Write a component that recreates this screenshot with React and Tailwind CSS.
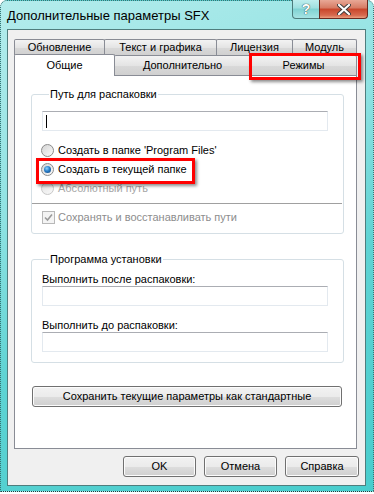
import React from "react";

function Radio({ checked, disabled }) {
  return (
    <span
      className={
        "relative flex h-[13px] w-[13px] shrink-0 items-center justify-center rounded-full border " +
        (disabled
          ? "border-[#c8c8c8] bg-gradient-to-br from-[#e6e6e6] to-[#f8f8f8]"
          : "border-[#8b8b8b] bg-gradient-to-br from-[#d4d4d4] to-[#fafafa]")
      }
    >
      {checked && (
        <span className="h-[7px] w-[7px] rounded-full bg-[radial-gradient(circle_at_40%_35%,#8fd3ff_0%,#2a7fc8_45%,#0d3f7a_100%)]" />
      )}
    </span>
  );
}

function Field({ className = "", children }) {
  return (
    <div
      className={
        "flex h-[20px] w-[286px] items-center border border-[#e3e9ef] border-t-[#abadb3] bg-white " + className
      }
    >
      {children}
    </div>
  );
}

function Btn({ children, className = "" }) {
  return (
    <div
      className={
        "flex items-center justify-center rounded-[3px] border border-[#707070] bg-[linear-gradient(#f2f2f2_0%,#ebebeb_50%,#dddddd_51%,#cfcfcf_100%)] text-[11px] leading-none text-black shadow-[inset_0_0_0_1px_#fcfcfc] " +
        className
      }
    >
      {children}
    </div>
  );
}

function Tab({ children, className = "" }) {
  return (
    <div
      className={
        "-ml-px flex items-center justify-center rounded-t-[2px] border border-b-0 border-[#898c95] bg-[linear-gradient(#f3f3f3,#e4e4e4_50%,#d9d9d9_51%,#d0d0d0)] text-[11px] leading-none text-black first:ml-0 " +
        className
      }
    >
      {children}
    </div>
  );
}

export default function App() {
  return (
    <div
      className="relative h-[494px] w-[374px] overflow-hidden bg-white"
      style={{ fontFamily: '"Liberation Sans", Arial, sans-serif' }}
    >
      {/* Window frame */}
      <div className="flex h-[492px] w-[374px] flex-col rounded-t-[7px] border border-dotted border-b-[#1e3e3e] border-l-[#3c7070] border-t-[#3c7070] border-r-[#3c7070] bg-[linear-gradient(160deg,#b4ecec_0%,#8fe2e2_35%,#5fd3d3_60%,#48cdcd_100%)] pb-[5px] pl-[6px] pr-[7px]">
        {/* Title bar */}
        <div className="flex h-[28px] items-start justify-between">
          <div className="mt-[8px] text-[13px] leading-[14px] text-black">
            Дополнительные параметры SFX
          </div>
          <div className="-mr-[2px] -mt-px flex">
            <div className="flex h-[19px] w-[28px] items-center justify-center rounded-bl-[4px] border border-t-0 border-[#4c7c7c] bg-[linear-gradient(#bfeeee,#9ee0e0_45%,#7fd2d2_50%,#a6e4e4)] text-[14px] font-bold leading-none text-white [text-shadow:0_0_1px_#2a4a4a,0_0_1px_#2a4a4a]">
              ?
            </div>
            <div className="-ml-px flex h-[19px] w-[49px] items-center justify-center rounded-br-[4px] border border-t-0 border-[#6a2a20] bg-[linear-gradient(#e8a896,#d67a62_45%,#c8452a_50%,#d76a4e_85%,#e9a080)]">
              <svg width="14" height="11" viewBox="0 0 14 11">
                <path
                  d="M2 1 L12 10 M12 1 L2 10"
                  stroke="#3a3a3a"
                  strokeWidth="4"
                  strokeLinecap="round"
                />
                <path
                  d="M2 1 L12 10 M12 1 L2 10"
                  stroke="#ffffff"
                  strokeWidth="2.2"
                  strokeLinecap="round"
                />
              </svg>
            </div>
          </div>
        </div>

        {/* Client area */}
        <div className="flex flex-1 flex-col border border-[#4f7d7d] bg-[#f0f0f0] pl-[6px] pr-[8px] pt-[9px]">
          {/* Tabs */}
          <div className="w-[343px]">
            <div className="flex h-[16px]">
              <Tab className="w-[91px]">Обновление</Tab>
              <Tab className="w-[113px]">Текст и графика</Tab>
              <Tab className="w-[77px]">Лицензия</Tab>
              <Tab className="w-[65px]">Модуль</Tab>
            </div>
            <div className="flex h-[20px] items-end">
              <div className="relative z-10 -mb-px flex h-[22px] w-[101px] items-start justify-center rounded-t-[2px] border border-b-0 border-[#898c95] bg-white pt-[5px] text-[11px] leading-none text-black">
                Общие
              </div>
              <Tab className="h-[20px] w-[137px]">Дополнительно</Tab>
              <Tab className="h-[20px] w-[107px]">Режимы</Tab>
            </div>

            {/* Panel */}
            <div className="flex h-[374px] flex-col border border-[#898c95] bg-white pl-[16px]">
              {/* Group 1 */}
              <fieldset className="mt-[11px] w-[313px] rounded-[3px] border border-[#d5dfe5] pb-[6px] pl-[10px]">
                <legend className="ml-[7px] px-[1px] text-[11px] leading-[14px] text-black">
                  Путь для распаковки
                </legend>
                <Field className="mt-[10px] border-[#b5cfe7] border-t-[#5c93bc] pl-[3px]">
                  <span className="h-[13px] w-px bg-black" />
                </Field>
                <div className="-ml-px mt-[10px] flex h-[19px] items-center gap-[4px] text-[11px] text-black">
                  <Radio />
                  <span>Создать в папке 'Program Files'</span>
                </div>
                <div className="-ml-px flex h-[19px] items-center gap-[4px] text-[11px] text-black">
                  <Radio checked />
                  <span>Создать в текущей папке</span>
                </div>
                <div className="-ml-px flex h-[19px] items-center gap-[4px] text-[11px] text-[#a6a6a6]">
                  <Radio disabled />
                  <span>Абсолютный путь</span>
                </div>
                <div className="-ml-[10px] mr-[1px] mt-[5px] h-px bg-[#a0a0a0]" />
                <div className="mt-[4px] flex h-[19px] items-center gap-[3px] text-[11px] text-[#8d8d8d]">
                  <span className="flex h-[13px] w-[13px] shrink-0 items-center justify-center border border-[#b8b8b8] bg-[#f4f4f4]">
                    <svg width="9" height="9" viewBox="0 0 9 9">
                      <path
                        d="M1 4.5 L3.5 7 L8 1.5"
                        fill="none"
                        stroke="#9a9a9a"
                        strokeWidth="1.6"
                      />
                    </svg>
                  </span>
                  <span>Сохранять и восстанавливать пути</span>
                </div>
              </fieldset>

              {/* Group 2 */}
              <fieldset className="mt-[18px] w-[313px] rounded-[3px] border border-[#d5dfe5] pb-[10px] pl-[10px]">
                <legend className="ml-[7px] px-[1px] text-[11px] leading-[14px] text-black">
                  Программа установки
                </legend>
                <div className="mt-[6px] text-[11px] leading-[14px] text-black">
                  Выполнить после распаковки:
                </div>
                <Field />
                <div className="mt-[12px] text-[11px] leading-[14px] text-black">
                  Выполнить до распаковки:
                </div>
                <Field />
              </fieldset>

              <Btn className="ml-px mt-[23px] h-[21px] w-[310px]">
                Сохранить текущие параметры как стандартные
              </Btn>
            </div>
          </div>

          {/* Dialog buttons */}
          <div className="mt-[7px] flex justify-end gap-[8px]">
            <Btn className="h-[21px] w-[73px] border-[#3c7fb1] shadow-[inset_0_0_0_1px_#9ad3f0]">OK</Btn>
            <Btn className="h-[21px] w-[73px]">Отмена</Btn>
            <Btn className="-mr-[2px] h-[21px] w-[74px]">Справка</Btn>
          </div>
        </div>
      </div>

      {/* Red highlight boxes (annotations) */}
      <div className="absolute left-[249px] top-[53px] h-[27px] w-[112px] border-[3px] border-[#ff0000] shadow-[2px_2px_3px_rgba(0,0,0,0.45)]" />
      <div className="absolute left-[36px] top-[158px] h-[26px] w-[159px] border-[3px] border-[#ff0000] shadow-[2px_2px_3px_rgba(0,0,0,0.45)]" />
    </div>
  );
}
